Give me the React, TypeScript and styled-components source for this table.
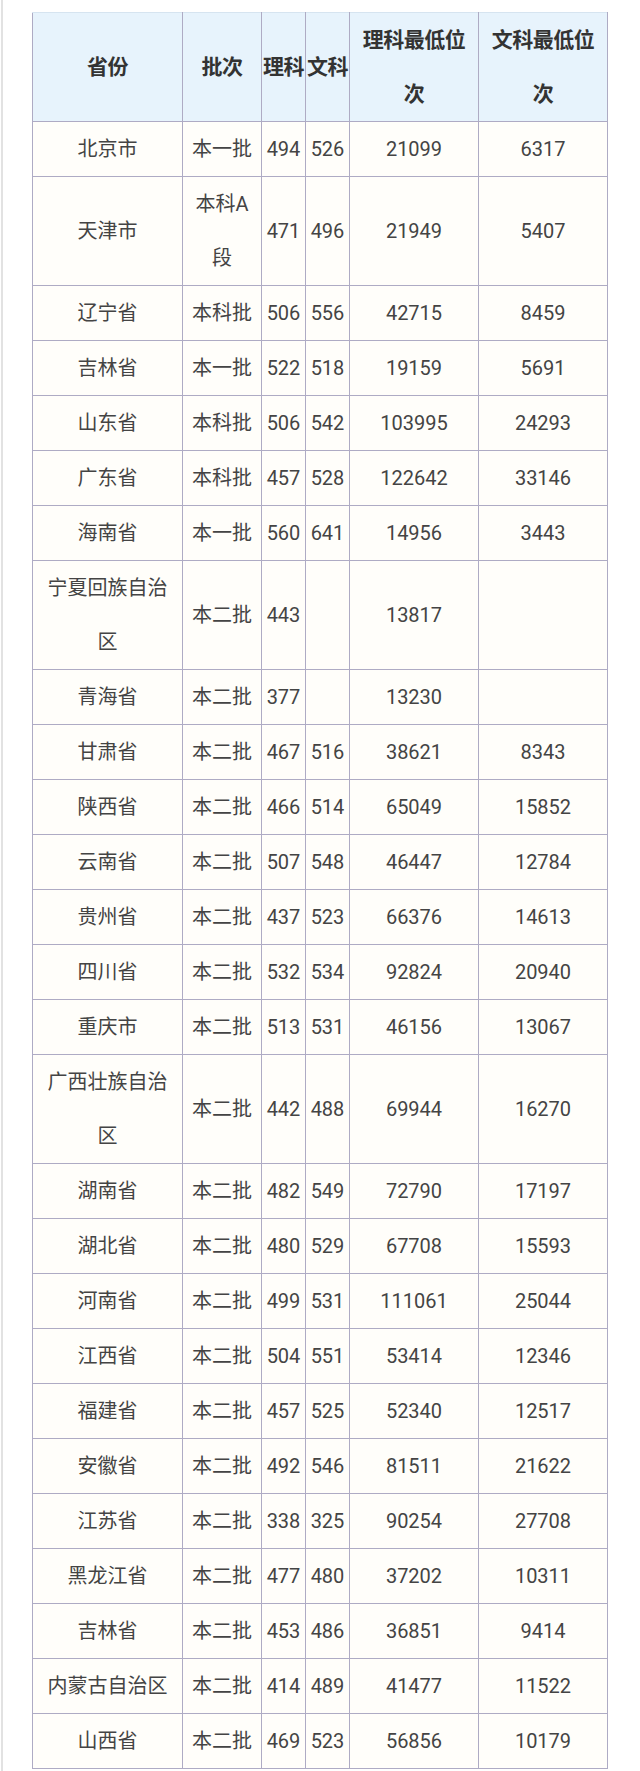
import React from 'react';
import styled, { createGlobalStyle } from 'styled-components';

const COLORS = {
    BORDER: '#aeabc4',
    HEADER_BG: '#e7f3fc',
    ROW_BG: '#fffefa',
    HEADER_TEXT: '#333333',
    TEXT: '#444444',
    PAGE_LINE: '#e2e2e2',
};

const GlobalStyle = createGlobalStyle`
    html, body {
        margin: 0;
        padding: 0;
        background: #ffffff;
    }
    body {
        font-family: Roboto, "Noto Sans CJK SC", sans-serif;
    }
`;

const Page = styled.div`
    min-height: 1771px;
    box-sizing: border-box;
    margin-left: 1px;
    border-left: 2px solid ${COLORS.PAGE_LINE};
    padding: 12px 0 0 29px;
`;

const Table = styled.table`
    width: 575px;
    table-layout: fixed;
    border-collapse: collapse;
`;

const HeadCell = styled.th`
    padding: 0;
    background: ${COLORS.HEADER_BG};
    border: 1px solid ${COLORS.BORDER};
    border-top-color: #d6e4f0;
    color: ${COLORS.HEADER_TEXT};
    font-size: 21px;
    font-weight: bold;
    line-height: 54px;
    text-align: center;
    vertical-align: middle;
    white-space: pre-line;
    letter-spacing: -0.5px;
`;

const Cell = styled.td`
    padding: 0;
    background: ${COLORS.ROW_BG};
    border: 1px solid ${COLORS.BORDER};
    color: ${COLORS.TEXT};
    font-size: 20px;
    line-height: 54px;
    text-align: center;
    vertical-align: middle;
    white-space: pre-line;
`;

const columns = [
    { label: '省份', width: 150 },
    { label: '批次', width: 79 },
    { label: '理科', width: 44 },
    { label: '文科', width: 44 },
    { label: '理科最低位\n次', width: 129 },
    { label: '文科最低位\n次', width: 129 },
];

type Row = [string, string, string, string, string, string];

const rows: Row[] = [
    ['北京市', '本一批', '494', '526', '21099', '6317'],
    ['天津市', '本科A\n段', '471', '496', '21949', '5407'],
    ['辽宁省', '本科批', '506', '556', '42715', '8459'],
    ['吉林省', '本一批', '522', '518', '19159', '5691'],
    ['山东省', '本科批', '506', '542', '103995', '24293'],
    ['广东省', '本科批', '457', '528', '122642', '33146'],
    ['海南省', '本一批', '560', '641', '14956', '3443'],
    ['宁夏回族自治\n区', '本二批', '443', '', '13817', ''],
    ['青海省', '本二批', '377', '', '13230', ''],
    ['甘肃省', '本二批', '467', '516', '38621', '8343'],
    ['陕西省', '本二批', '466', '514', '65049', '15852'],
    ['云南省', '本二批', '507', '548', '46447', '12784'],
    ['贵州省', '本二批', '437', '523', '66376', '14613'],
    ['四川省', '本二批', '532', '534', '92824', '20940'],
    ['重庆市', '本二批', '513', '531', '46156', '13067'],
    ['广西壮族自治\n区', '本二批', '442', '488', '69944', '16270'],
    ['湖南省', '本二批', '482', '549', '72790', '17197'],
    ['湖北省', '本二批', '480', '529', '67708', '15593'],
    ['河南省', '本二批', '499', '531', '111061', '25044'],
    ['江西省', '本二批', '504', '551', '53414', '12346'],
    ['福建省', '本二批', '457', '525', '52340', '12517'],
    ['安徽省', '本二批', '492', '546', '81511', '21622'],
    ['江苏省', '本二批', '338', '325', '90254', '27708'],
    ['黑龙江省', '本二批', '477', '480', '37202', '10311'],
    ['吉林省', '本二批', '453', '486', '36851', '9414'],
    ['内蒙古自治区', '本二批', '414', '489', '41477', '11522'],
    ['山西省', '本二批', '469', '523', '56856', '10179'],
];

const App: React.FC = () => {
    return (
        <>
            <GlobalStyle />
            <Page>
                <Table>
                    <colgroup>
                        {columns.map((col) => (
                            <col key={col.label} style={{ width: col.width }} />
                        ))}
                    </colgroup>
                    <thead>
                        <tr>
                            {columns.map((col) => (
                                <HeadCell key={col.label}>{col.label}</HeadCell>
                            ))}
                        </tr>
                    </thead>
                    <tbody>
                        {rows.map((row, i) => (
                            <tr key={i}>
                                {row.map((value, j) => (
                                    <Cell key={j}>{value}</Cell>
                                ))}
                            </tr>
                        ))}
                    </tbody>
                </Table>
            </Page>
        </>
    );
};

export default App;
